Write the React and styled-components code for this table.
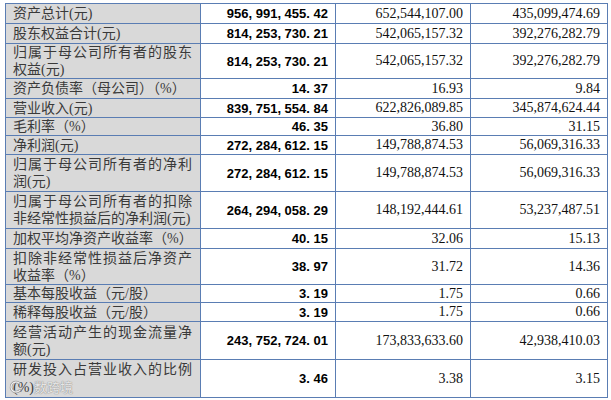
import React from 'react';
import styled, { createGlobalStyle } from 'styled-components';

const GlobalStyle = createGlobalStyle`
  html, body {
    margin: 0;
    padding: 0;
    background: #ffffff;
  }
  body {
    padding: 3px 5px 0 5px;
  }
`;

const Table = styled.table`
  border-collapse: collapse;
  table-layout: fixed;
  width: 602px;
`;

const Row = styled.tr`
  height: ${(p) => p.h}px;
`;

const LabelCell = styled.td`
  position: relative;
  background: #d9d9d9;
  border: 1px solid #5a7db3;
  padding: 0 8px 0 7px;
  font-family: 'Liberation Serif', 'Noto Sans CJK SC', serif;
  font-size: 14px;
  line-height: 17px;
  color: #3a3a3a;
  vertical-align: middle;
`;

const LabelLine = styled.div`
  position: relative;
  white-space: nowrap;
  text-align: ${(p) => (p.spread ? 'justify' : 'left')};
  text-align-last: ${(p) => (p.spread ? 'justify' : 'left')};
`;

const Faint = styled.span`
  font-family: 'Noto Sans CJK SC', sans-serif;
  font-size: 13px;
  color: rgba(255, 255, 255, 0.8);
  text-shadow: 0 0 1px #8a8a8a, 0 0 1px #8a8a8a;
`;

const MarkSvg = styled.svg`
  position: absolute;
  left: -5px;
  top: 2px;
  pointer-events: none;
`;

const BoldCell = styled.td`
  border: 1px solid #5a7db3;
  padding: 0 7px 0 0;
  text-align: right;
  vertical-align: middle;
  font-family: 'Liberation Sans', Arial, sans-serif;
  font-weight: bold;
  font-size: 13px;
  color: #000;
  white-space: nowrap;
`;

const ValueCell = styled.td`
  border: 1px solid #5a7db3;
  padding: 0 7px 0 0;
  text-align: right;
  vertical-align: middle;
  font-family: 'Liberation Serif', 'Times New Roman', serif;
  font-size: 14px;
  color: #111;
  white-space: nowrap;
`;

const rows = [
  { h: 20, label: ['资产总计(元)'], bold: '956, 991, 455. 42', a: '652,544,107.00', b: '435,099,474.69' },
  { h: 20, label: ['股东权益合计(元)'], bold: '814, 253, 730. 21', a: '542,065,157.32', b: '392,276,282.79' },
  { h: 34, label: ['归属于母公司所有者的股东', '权益(元)'], bold: '814, 253, 730. 21', a: '542,065,157.32', b: '392,276,282.79' },
  { h: 20, label: ['资产负债率（母公司）（%）'], bold: '14. 37', a: '16.93', b: '9.84' },
  { h: 19, label: ['营业收入(元)'], bold: '839, 751, 554. 84', a: '622,826,089.85', b: '345,874,624.44' },
  { h: 18, label: ['毛利率（%）'], bold: '46. 35', a: '36.80', b: '31.15' },
  { h: 19, label: ['净利润(元)'], bold: '272, 284, 612. 15', a: '149,788,874.53', b: '56,069,316.33' },
  { h: 37, label: ['归属于母公司所有者的净利', '润(元)'], bold: '272, 284, 612. 15', a: '149,788,874.53', b: '56,069,316.33' },
  { h: 37, label: ['归属于母公司所有者的扣除', '非经常性损益后的净利润(元)'], bold: '264, 294, 058. 29', a: '148,192,444.61', b: '53,237,487.51' },
  { h: 20, label: ['加权平均净资产收益率（%）'], bold: '40. 15', a: '32.06', b: '15.13' },
  { h: 36, label: ['扣除非经常性损益后净资产', '收益率（%）'], bold: '38. 97', a: '31.72', b: '14.36' },
  { h: 18, label: ['基本每股收益（元/股）'], bold: '3. 19', a: '1.75', b: '0.66' },
  { h: 19, label: ['稀释每股收益（元/股）'], bold: '3. 19', a: '1.75', b: '0.66' },
  { h: 38, label: ['经营活动产生的现金流量净', '额(元)'], bold: '243, 752, 724. 01', a: '173,833,633.60', b: '42,938,410.03' },
  { h: 38, label: ['研发投入占营业收入的比例', '(%)'], bold: '3. 46', a: '3.38', b: '3.15', mark: true },
];

// watermark swirl drawn over the last label line
function MarkIcon() {
  return (
    <MarkSvg width="16" height="14" viewBox="0 0 16 14">
      <path d="M11 3 A5 5 0 1 0 12 10" fill="none" stroke="#9a9a9a" strokeWidth="2.6" strokeLinecap="round" />
      <path d="M11 3 A5 5 0 1 0 12 10" fill="none" stroke="#f2f2f2" strokeWidth="1.2" strokeLinecap="round" />
    </MarkSvg>
  );
}

export default function App() {
  return (
    <>
      <GlobalStyle />
      <Table>
        <colgroup>
          <col style={{ width: 195 }} />
          <col style={{ width: 135 }} />
          <col style={{ width: 135 }} />
          <col style={{ width: 137 }} />
        </colgroup>
        <tbody>
          {rows.map((r, i) => (
            <Row key={i} h={r.h}>
              <LabelCell>
                {r.label.map((line, j) => (
                  <LabelLine key={j} spread={r.label.length > 1 && j === 0}>
                    {line}
                    {r.mark && j === 1 && (
                      <>
                        <Faint>数跨境</Faint>
                        <MarkIcon />
                      </>
                    )}
                  </LabelLine>
                ))}
              </LabelCell>
              <BoldCell>{r.bold}</BoldCell>
              <ValueCell>{r.a}</ValueCell>
              <ValueCell>{r.b}</ValueCell>
            </Row>
          ))}
        </tbody>
      </Table>
    </>
  );
}
